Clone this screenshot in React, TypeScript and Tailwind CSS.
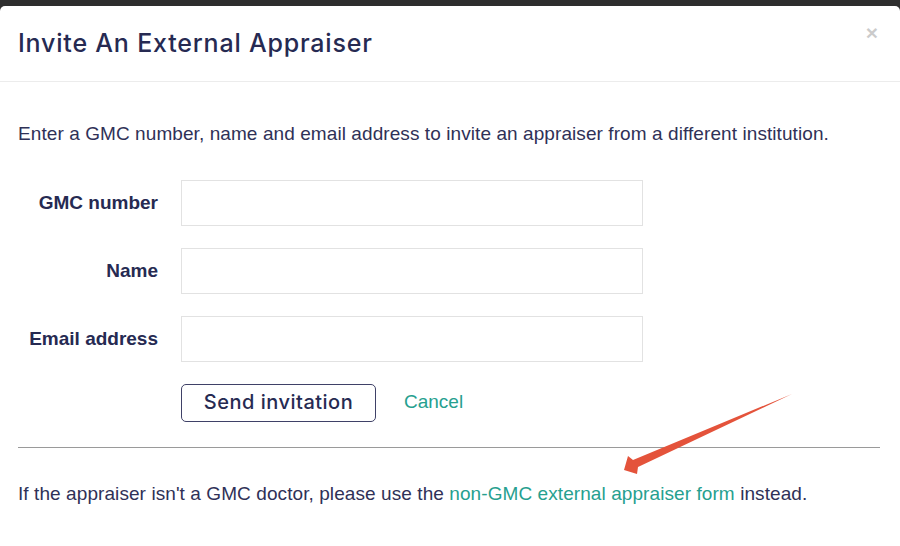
import React from "react";

export default function App() {
  const sans = { fontFamily: '"Liberation Sans", Arial, sans-serif' };
  const geo = { fontFamily: 'Inter, "Open Sans", sans-serif' };
  return (
    <div className="w-[900px] h-[546px] bg-[#2e2e2e] pt-[6px] overflow-hidden">
      <div className="relative bg-white rounded-t-[5px] h-[540px]">
        <div className="h-[76px] border-b border-[#ececec] px-[18px] flex items-center">
          <h1 className="text-[25px] font-medium text-[#262a52] tracking-[0.8px]" style={geo}>
            Invite An External Appraiser
          </h1>
        </div>
        <button
          className="absolute top-[16px] right-[22px] text-[21px] font-bold text-black opacity-20 leading-none"
          style={sans}
        >
          ×
        </button>
        <div className="pl-[18px] pr-[20px] pt-[40px] text-[#2f3157]" style={sans}>
          <p className="text-[19px] leading-[24px] tracking-[0.08px]">
            Enter a GMC number, name and email address to invite an appraiser from a different institution.
          </p>
          <div className="mt-[34px] flex flex-col gap-[22px]">
            {["GMC number", "Name", "Email address"].map((l) => (
              <div key={l} className="flex items-center">
                <label className="w-[140px] text-right font-bold text-[19px] text-[#262a52] whitespace-nowrap">{l}</label>
                <div className="ml-[23px] w-[462px] h-[46px] border border-[#e2e2e2]" />
              </div>
            ))}
          </div>
          <div className="mt-[22px] ml-[163px] flex items-center">
            <button
              className="w-[195px] h-[38px] border border-[#3f4167] rounded-[5px] text-[20px] font-medium text-[#262a52] tracking-[0.5px] leading-none pb-[2px]"
              style={geo}
            >
              Send invitation
            </button>
            <span className="ml-[28px] text-[19px] text-[#26a08f] -mt-[2px]">Cancel</span>
          </div>
          <div className="mt-[25px] border-t border-[#9a9a9a]" />
          <p className="mt-[34px] text-[19px] leading-[24px] tracking-[0.08px]">
            If the appraiser isn't a GMC doctor, please use the{" "}
            <span className="text-[#26a08f]">non-GMC external appraiser form</span> instead.
          </p>
        </div>
      </div>
      <svg className="absolute left-0 top-0 pointer-events-none" width="900" height="546">
        <polygon points="624,470 628,456 633,460 792,394 638,467 637,474" fill="#e4533b" />
      </svg>
    </div>
  );
}
